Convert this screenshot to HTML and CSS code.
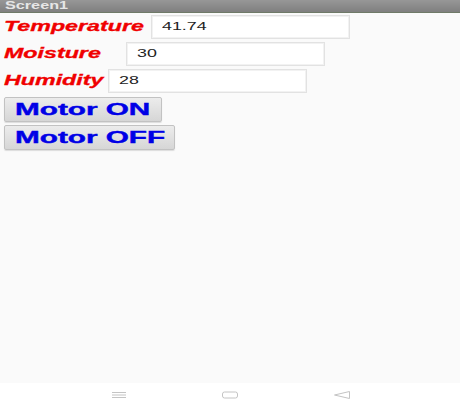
FILE: index.html
```html
<!DOCTYPE html>
<html>
<head>
<meta charset="utf-8">
<link rel="stylesheet" href="styles.css">
</head>
<body>
<div class="screen">
  <div class="titlebar"><span class="s title">Screen1</span></div>
  <div class="content">
    <div class="row">
      <div class="label w1"><span class="s">Temperature</span></div>
      <div class="box"><span class="s val">41.74</span></div>
    </div>
    <div class="row">
      <div class="label w2"><span class="s">Moisture</span></div>
      <div class="box"><span class="s val">30</span></div>
    </div>
    <div class="row">
      <div class="label w3"><span class="s">Humidity</span></div>
      <div class="box"><span class="s val">28</span></div>
    </div>
    <div class="btn b1"><span class="s">Motor ON</span></div>
    <div class="btn b2"><span class="s">Motor OFF</span></div>
  </div>
  <div class="navbar">
    <svg class="nav-ico" width="16" height="8" viewBox="0 0 16 8"><path d="M1 1.5H15M1 4H15M1 6.5H15" stroke="#c4c4c4" stroke-width="1" fill="none"/></svg>
    <svg class="nav-ico" width="18" height="8" viewBox="0 0 18 8"><rect x="1.5" y="1" width="15" height="6" rx="2" stroke="#c4c4c4" stroke-width="1" fill="none"/></svg>
    <svg class="nav-ico" width="18" height="10" viewBox="0 0 18 10"><path d="M16.5 1.5V8.5L1.5 5Z" stroke="#c4c4c4" stroke-width="1" fill="none" stroke-linejoin="round"/></svg>
  </div>
</div>
</body>
</html>
```
FILE: styles.css
```css
html, body {
  margin: 0;
  padding: 0;
}
body {
  width: 460px;
  height: 406px;
  overflow: hidden;
  font-family: "Liberation Sans", Arial, sans-serif;
  background: #fafafa;
}
.screen {
  display: flex;
  flex-direction: column;
  height: 406px;
}
.s {
  display: inline-block;
  transform-origin: left center;
  white-space: nowrap;
}
.titlebar {
  height: 13px;
  background: linear-gradient(#979797, #7f7f7f);
  border-bottom: 1px solid #6f7a68;
  box-sizing: border-box;
  padding-left: 5px;
  display: flex;
  align-items: center;
}
.title {
  color: #e6e6e6;
  font-size: 10px;
  font-weight: bold;
  transform: scaleX(1.62);
  line-height: 12px;
}
.content {
  flex: 1;
  padding: 2px 0 0 4px;
  display: flex;
  flex-direction: column;
  gap: 3px;
}
.row {
  display: flex;
  align-items: center;
  height: 24px;
}
.label {
  color: #f00000;
  font-size: 14px;
  font-weight: bold;
  font-style: italic;
  height: 24px;
  display: flex;
  align-items: center;
  padding-bottom: 2px;
  box-sizing: border-box;
}
.label .s {
  transform: scaleX(1.66);
  -webkit-text-stroke: 0.3px #f00000;
}
.w1 { width: 147px; }
.w2 { width: 122px; }
.w3 { width: 104px; }
.box {
  width: 199px;
  height: 24px;
  box-sizing: border-box;
  background: #ffffff;
  border: 1px solid #e2e2e2;
  box-shadow: inset 0 0 0 1px #f2f2f2;
  padding-left: 10px;
  display: flex;
  align-items: center;
  padding-bottom: 3px;
}
.val {
  color: #222;
  font-size: 10.5px;
  transform: scaleX(1.7);
}
.btn {
  height: 25px;
  box-sizing: border-box;
  background: linear-gradient(#ececec, #d6d6d6);
  border: 1px solid #c2c2c2;
  border-radius: 2px;
  box-shadow: 0 1px 1px rgba(0,0,0,0.12);
  padding-left: 10px;
  display: flex;
  align-items: center;
  color: #0000e6;
  font-size: 16.5px;
  font-weight: bold;
}
.btn .s {
  transform: scaleX(1.8);
  -webkit-text-stroke: 0.4px #0000e6;
}
.b1 { width: 158px; margin-top: 1px; }
.b2 { width: 171px; }
.navbar {
  height: 23px;
  background: #ffffff;
  display: flex;
  align-items: center;
  justify-content: center;
  gap: 94px;
  padding-left: 2px;
}
.nav-ico {
  display: block;
}
```
